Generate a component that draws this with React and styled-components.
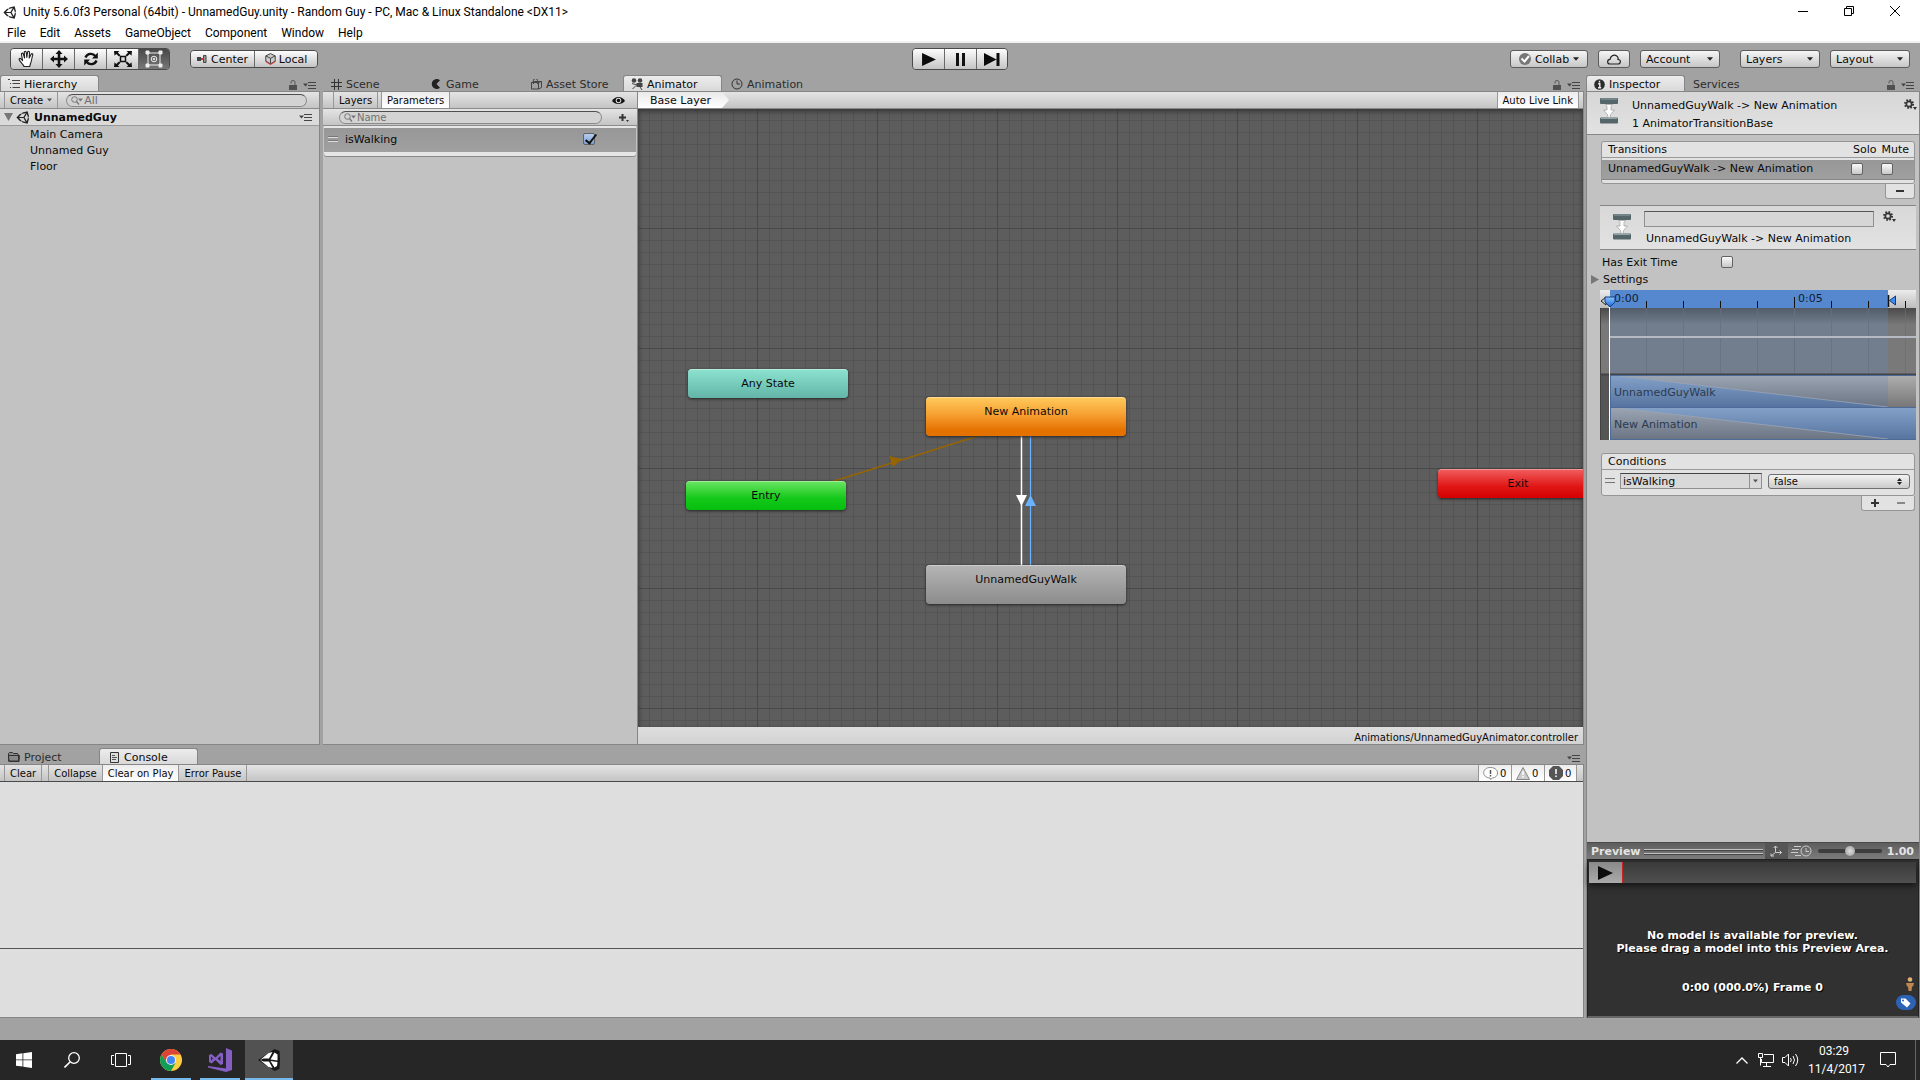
import React from 'react';
import styled, { createGlobalStyle } from 'styled-components';
import { FaUnity } from 'react-icons/fa';

const GlobalStyle = createGlobalStyle`
	* {
		box-sizing: border-box;
	}
	body {
		margin: 0;
		background: #a2a2a2;
		font-family: 'DejaVu Sans', Verdana, sans-serif;
		font-size: 11px;
		color: #0a0a0a;
	}
	button, input, select {
		font: inherit;
		color: inherit;
		margin: 0;
		border-radius: 0;
	}
	h1, h2, p, ul {
		margin: 0;
		padding: 0;
		font-size: inherit;
		font-weight: inherit;
		list-style: none;
	}
	svg {
		display: block;
		flex: none;
	}
`

const Screen = styled.div`
	display: flex;
	flex-direction: column;
	min-height: 100vh;
`

/* ---------- window chrome ---------- */

const TitleBar = styled.header`
	display: flex;
	align-items: center;
	height: 24px;
	padding: 0 2px 0 3px;
	background: #fff;
	font-family: Roboto, 'Noto Sans', sans-serif;
	font-size: 12px;
	color: #000;
	h1 {
		flex: 1;
		padding-left: 5px;
		white-space: nowrap;
	}
`

const WindowButton = styled.button`
	display: flex;
	justify-content: center;
	align-items: center;
	width: 46px;
	height: 24px;
	padding: 0 0 3px;
	border: 0;
	background: none;
`

const MenuBar = styled.nav`
	display: flex;
	gap: 14px;
	height: 19px;
	padding: 0 7px;
	border-bottom: 2px solid #f0f0f0;
	background: #fff;
	font-family: Roboto, 'Noto Sans', sans-serif;
	font-size: 12px;
	line-height: 18px;
	a {
		color: #000;
		text-decoration: none;
	}
`

const Toolbar = styled.div`
	display: grid;
	grid-template-columns: 1fr auto 1fr;
	align-items: center;
	height: 32px;
	padding: 0 10px;
`

const ToolbarSide = styled.div`
	display: flex;
	align-items: center;
	justify-content: ${(props) => (props.$end ? 'flex-end' : 'flex-start')};
	gap: ${(props) => (props.$end ? '10px' : '20px')};
`

const ButtonGroup = styled.div`
	display: flex;
	border: 1px solid #4a4a4a;
	border-radius: 4px;
	overflow: hidden;
`

const ToolButton = styled.button`
	display: flex;
	align-items: center;
	justify-content: center;
	gap: 3px;
	width: ${(props) => (props.$wide ? '64px' : '32px')};
	height: ${(props) => (props.$wide ? '16px' : '20px')};
	padding: 0;
	border: 0;
	background: ${(props) => (props.$on ? 'linear-gradient(#484848, #777)' : 'linear-gradient(#fdfdfd, #c4c4c4)')};
	& + & {
		border-left: 1px solid #6a6a6a;
	}
	&:first-child,
	&:last-child {
		width: ${(props) => (props.$wide ? '63px' : '31px')};
	}
`

const PillButton = styled.button`
	display: flex;
	align-items: center;
	justify-content: center;
	gap: 4px;
	width: ${(props) => (props.$small ? '32px' : '78px')};
	height: 18px;
	padding: 0;
	border: 1px solid #5c5c5c;
	border-radius: 3px;
	background: linear-gradient(#f6f6f6, #c6c6c6);
`

const MenuSelect = styled.span`
	position: relative;
	display: flex;
	margin-left: ${(props) => (props.$apart ? '10px' : '0')};
	select {
		appearance: none;
		width: 80px;
		height: 18px;
		padding: 0 5px;
		border: 1px solid #5c5c5c;
		border-radius: 3px;
		background: linear-gradient(#f6f6f6, #c6c6c6);
	}
	svg {
		position: absolute;
		right: 7px;
		top: 7px;
		pointer-events: none;
	}
`

/* ---------- docked panels ---------- */

const Workspace = styled.main`
	flex: 1;
	display: grid;
	grid-template-columns: minmax(0, 1fr) 334px;
	gap: 2px;
`

const MainColumn = styled.div`
	display: flex;
	flex-direction: column;
	gap: 3px;
	min-width: 0;
`

const TopRow = styled.div`
	flex: 1;
	display: grid;
	grid-template-columns: 320px minmax(0, 1fr);
	gap: 3px;
`

const Panel = styled.section`
	display: flex;
	flex-direction: column;
	min-width: 0;
	${(props) => props.$short && 'height: 270px;'}
`

const TabStrip = styled.div`
	display: flex;
	align-items: flex-end;
	height: 16px;
	padding-right: ${(props) => props.$inset || '4px'};
	gap: ${(props) => (props.$spaced ? '1px' : '0')};
`

const Tab = styled.button`
	display: flex;
	align-items: center;
	gap: 4px;
	width: 99px;
	height: 16px;
	padding: 1px 7px 0;
	border: 1px solid transparent;
	border-bottom: 0;
	background: none;
	color: #2c2c2c;
	white-space: nowrap;
	${(props) =>
		props.$active &&
		`
		border-color: #858585;
		border-radius: 3px 3px 0 0;
		background: linear-gradient(#ececec, #d9d9d9);
		color: #0a0a0a;
	`}
`

const TabTools = styled.div`
	display: flex;
	align-items: center;
	gap: 6px;
	height: 11px;
	margin-left: auto;
	button {
		padding: 0;
		border: 0;
		background: none;
	}
`

const PanelBody = styled.div`
	flex: 1;
	display: flex;
	flex-direction: column;
	min-width: 0;
	border: 1px solid #868686;
	border-left: 0;
	background: #c2c2c2;
`

const MiniBar = styled.div`
	display: flex;
	align-items: center;
	height: 17px;
	padding: 0 4px;
	border-bottom: 1px solid #8b8b8b;
	background: linear-gradient(#e4e4e4, #c4c4c4);
`

const MiniButton = styled.button`
	display: flex;
	align-items: center;
	gap: 4px;
	height: 16px;
	padding: 0 5px;
	border: 0;
	border-left: 1px solid #979797;
	border-right: ${(props) => (props.$last ? '1px solid #979797' : '0')};
	margin-right: ${(props) => props.$gap || '0'};
	background: ${(props) => (props.$on ? 'linear-gradient(#ededed, #fff)' : 'none')};
	font-size: 10px;
	white-space: nowrap;
`

const SearchBox = styled.label`
	flex: 1;
	display: flex;
	align-items: center;
	gap: 1px;
	height: 13px;
	margin: 0 8px;
	padding: 0 4px;
	border: 1px solid #8a8a8a;
	border-top-color: #4f4f4f;
	border-radius: 7px;
	background: #d3d3d3;
	input {
		flex: 1;
		min-width: 0;
		height: 11px;
		padding: 0;
		border: 0;
		outline: 0;
		background: none;
		font-size: ${(props) => props.$size || '11px'};
		line-height: 11px;
		&::placeholder {
			color: #707070;
			opacity: 1;
		}
	}
`

const SceneRow = styled.div`
	display: flex;
	align-items: center;
	gap: 3px;
	height: 17px;
	padding: 0 7px 0 4px;
	border-bottom: 1px solid #999;
	background: #dadada;
	font-weight: bold;
	button {
		margin-left: auto;
		padding: 0;
		border: 0;
		background: none;
	}
`

const ObjectList = styled.ul`
	li {
		height: 16px;
		padding-left: 30px;
		line-height: 17px;
	}
`

/* ---------- animator ---------- */

const AnimatorBody = styled.div`
	flex: 1;
	display: grid;
	grid-template-columns: 315px minmax(0, 1fr);
	border-bottom: 1px solid #868686;
`

const Side = styled.div`
	display: flex;
	flex-direction: column;
	border-top: 1px solid #868686;
	border-right: 1px solid #868686;
	background: #c2c2c2;
`

const ParamBar = styled(MiniBar)`
	padding-left: 10px;
	padding-right: 12px;
`

const FilterBar = styled(MiniBar)`
	padding: 0 6px 0 8px;
`

const IconButton = styled.button`
	display: flex;
	padding: 0;
	border: 0;
	margin-left: auto;
	background: none;
`

const ParamRow = styled.div`
	display: flex;
	align-items: center;
	gap: 7px;
	height: 30px;
	margin: 0 1px;
	padding: 0 41px 2px 4px;
	border: solid #e6e6e6;
	border-width: 2px 0 4px;
	border-radius: 0 0 3px 3px;
	box-shadow: 0 1px 0 #8a8a8a;
	background: linear-gradient(#979797, #a0a0a0);
	label {
		flex: 1;
	}
`

const Check = styled.input`
	appearance: none;
	display: flex;
	flex: none;
	width: 12px;
	height: 12px;
	border: 1px solid #636363;
	border-radius: 2px;
	background: linear-gradient(#fafafa, #c8c8c8);
	&:checked {
		background: linear-gradient(#b5cdf0, #7d9fd2);
	}
	&:checked::after {
		content: '';
		width: 5px;
		height: 10px;
		margin: -2px 0 0 4px;
		border: solid #111;
		border-width: 0 2px 2px 0;
		transform: rotate(38deg);
	}
`

const GraphColumn = styled.div`
	display: flex;
	flex-direction: column;
	min-width: 0;
	border-top: 1px solid #868686;
	border-right: 1px solid #868686;
`

const Crumb = styled.div`
	display: flex;
	align-items: center;
	width: 91px;
	height: 16px;
	padding-left: 12px;
	background: linear-gradient(#e9e9e9, #fff);
	clip-path: polygon(0 0, 84px 0, 100% 50%, 84px 100%, 0 100%);
`

const GraphBar = styled(MiniBar)`
	justify-content: space-between;
	padding: 0 4px 0 0;
`

const Graph = styled.div`
	flex: 1;
	position: relative;
	overflow: hidden;
	background-color: #5d5d5d;
	background-image: linear-gradient(90deg, #484848 1px, transparent 1px), linear-gradient(#484848 1px, transparent 1px),
		linear-gradient(90deg, #545454 1px, transparent 1px), linear-gradient(#545454 1px, transparent 1px);
	background-size: 120px 120px, 120px 120px, 12px 12px, 12px 12px;
	background-position: -1px -1px;
	box-shadow: inset 0 5px 6px -3px #333, inset 3px 0 4px -2px #444, inset -3px 0 4px -2px #444;
	svg {
		position: absolute;
		left: 0;
		top: 0;
	}
`

const nodeColors = {
	teal: '#8ce3cf, #62b5a8',
	orange: '#ffcb5c, #f7a032 45%, #e57200 85%',
	green: '#6be563, #14c81a 60%, #05bf0d',
	grey: '#b5b5b5, #8c8c8c',
	red: '#f15f5f, #e01616 60%, #d40000',
};

const Node = styled.div`
	position: absolute;
	left: ${(props) => props.$x}px;
	top: ${(props) => props.$y}px;
	width: ${(props) => (props.$state ? 200 : 160)}px;
	height: ${(props) => (props.$state ? 39 : 29)}px;
	border-radius: 4px;
	background: linear-gradient(${(props) => nodeColors[props.$color]});
	box-shadow: 0 1px 3px #222, inset 0 1px 0 rgba(255, 255, 255, 0.35);
	line-height: 29px;
	text-align: center;
`

const GraphStatus = styled.footer`
	height: 17px;
	padding-right: 5px;
	background: linear-gradient(#dedede, #d2d2d2);
	font-size: 10px;
	line-height: 22px;
	text-align: right;
`

/* ---------- console ---------- */

const ConsoleBody = styled(PanelBody)`
	background: #dedede;
`

const ConsoleBar = styled(MiniBar)`
	padding-right: 6px;
	border-bottom-color: #4a4a4a;
`

const Counters = styled.div`
	display: flex;
	margin-left: auto;
	button {
		width: 33px;
		padding: 0 4px;
		gap: 2px;
	}
`

const LogList = styled.div`
	flex: 1;
	border-bottom: 1px solid #555;
`

const LogDetail = styled.div`
	height: 68px;
`

/* ---------- inspector ---------- */

const InspectorBody = styled(PanelBody)`
	border-left: 1px solid #868686;
	border-bottom: 0;
`

const InspectorHead = styled.div`
	display: flex;
	gap: 14px;
	height: 43px;
	padding: 5px 2px 0 13px;
	border-bottom: 1px solid #868686;
	background: linear-gradient(#d6d6d6, #e2e2e2);
	line-height: 18px;
	div {
		flex: 1;
	}
	button {
		align-items: flex-start;
		height: 14px;
		margin-top: 2px;
	}
`

const ListBox = styled.div`
	margin: ${(props) => props.$top} 4px 0 14px;
	border: 1px solid #959595;
	border-radius: 3px;
	background: #e2e2e2;
`

const ListHead = styled.div`
	display: flex;
	gap: 5px;
	height: 16px;
	padding: 0 5px 0 6px;
	border-bottom: 1px solid #999;
	line-height: 15px;
	span:first-child {
		flex: 1;
	}
`

const TransitionRow = styled.div`
	display: flex;
	align-items: center;
	height: 20px;
	margin: 2px 0 3px;
	padding: 0 21px 2px 6px;
	gap: 18px;
	border-bottom: 1px solid #888;
	background: linear-gradient(#979797, #a0a0a0);
	span {
		flex: 1;
	}
`

const ListFooter = styled.div`
	display: flex;
	align-self: flex-end;
	align-items: center;
	height: 15px;
	margin-right: 4px;
	border: 1px solid #959595;
	border-top: 0;
	border-radius: 0 0 3px 3px;
	background: #e2e2e2;
	button {
		display: flex;
		justify-content: center;
		align-items: center;
		width: ${(props) => (props.$pair ? '26px' : '28px')};
		padding: 0;
		border: 0;
		background: none;
	}
`

const TransitionHead = styled.div`
	display: grid;
	grid-template-columns: 31px 239px auto;
	height: 45px;
	margin: 6px 3px 5px 13px;
	padding: 5px 0 0 13px;
	border: solid #868686;
	border-width: 1px 0;
	background: linear-gradient(#d8d8d8, #e2e2e2);
	> svg {
		grid-row: 1 / 3;
		margin-top: 2px;
	}
	input {
		width: 230px;
		height: 16px;
		border: 1px solid #909090;
		border-top-color: #555;
		background: #d6d6d6;
	}
	p {
		grid-column: 2;
		padding-left: 2px;
		line-height: 24px;
		white-space: nowrap;
	}
	button {
		margin: 0;
	}
`

const Field = styled.div`
	display: flex;
	align-items: center;
	height: 14px;
	padding-left: 15px;
	label {
		width: 119px;
	}
`

const Foldout = styled.button`
	display: flex;
	align-items: center;
	gap: 4px;
	height: 21px;
	padding: 0 4px;
	border: 0;
	background: none;
`

const Timeline = styled.div`
	height: 150px;
	margin: 0 3px 0 13px;
	overflow: hidden;
	background: #555;
	font-size: 11px;
`

const ConditionRow = styled.div`
	display: flex;
	align-items: center;
	gap: 5px;
	height: 25px;
	padding: 0 4px 3px 3px;
	> select {
		appearance: none;
		width: 142px;
		height: 15px;
		margin-left: 1px;
		padding: 0 5px;
		border: 1px solid #6f6f6f;
		border-radius: 3px;
		background: linear-gradient(#f3f3f3, #cbcbcb);
		font-size: 10px;
	}
	> svg:last-child {
		margin-left: -18px;
		margin-right: 5px;
		pointer-events: none;
	}
`

const ComboBox = styled.div`
	display: flex;
	width: 142px;
	height: 16px;
	border: 1px solid #909090;
	border-top-color: #444;
	background: #d9d9d9;
	input {
		flex: 1;
		min-width: 0;
		padding: 0 2px;
		border: 0;
		background: none;
	}
	button {
		display: flex;
		justify-content: center;
		width: 12px;
		padding: 5px 0 0;
		border: 0;
		border-left: 1px solid #909090;
		background: none;
	}
`

const PreviewBar = styled.div`
	display: flex;
	align-items: center;
	height: 17px;
	margin-top: auto;
	padding: 0 5px 0 4px;
	border-top: 1px solid #4a4a4a;
	background: linear-gradient(#5d5d5d, #7c7c7c);
	color: #e4e4e4;
	font-weight: bold;
`

const Grip = styled.div`
	flex: 1;
	height: 5px;
	margin: 0 2px 0 3px;
	border: solid #c0c0c0;
	border-width: 1px 0;
	box-shadow: 0 1px 0 #444, inset 0 1px 0 #444;
`

const PivotButton = styled.button`
	display: flex;
	justify-content: center;
	align-items: center;
	width: 23px;
	height: 16px;
	padding: 0;
	border: 0;
	margin-right: 3px;
	background: #555;
`

const Speed = styled.input`
	appearance: none;
	width: 64px;
	height: 12px;
	margin: 0 5px 0 6px !important;
	background: none;
	&::-webkit-slider-runnable-track {
		height: 4px;
		border-radius: 2px;
		background: #3d3d3d;
	}
	&::-webkit-slider-thumb {
		appearance: none;
		width: 10px;
		height: 10px;
		margin-top: -3px;
		border-radius: 50%;
		background: radial-gradient(#ddd, #999);
	}
`

const Preview = styled.div`
	display: flex;
	flex-direction: column;
	height: 159px;
	padding: 2px 2px 2px 1px;
	border: 1px solid #222;
	border-bottom: 2px solid #666;
	background: #313131;
	color: #fff;
	font-weight: bold;
	text-align: center;
	text-shadow: 1px 1px 1px #000;
	line-height: 13px;
`

const PlayStrip = styled.div`
	height: 21px;
	margin-bottom: 46px;
	background: linear-gradient(#3a3a3a, #505050);
	box-shadow: 0 3px 6px #161616;
	button {
		display: flex;
		align-items: center;
		width: 34px;
		height: 21px;
		padding: 0 9px;
		border: 0;
		border-right: 1px solid #c22;
		background: linear-gradient(#8a8a8a, #aaa);
	}
`

const PreviewFooter = styled.div`
	display: grid;
	grid-template-columns: 20px 1fr 20px;
	margin-top: 22px;
	align-items: start;
	p {
		grid-column: 2;
		padding-top: 4px;
	}
	div {
		display: flex;
		flex-direction: column;
		align-items: flex-end;
		gap: 4px;
		svg:first-child {
			margin-right: 2px;
		}
	}
`

const StatusStrip = styled.div`
	height: 22px;
`

/* ---------- taskbar ---------- */

const Taskbar = styled.footer`
	display: flex;
	height: 40px;
	background: #262626;
	color: #fff;
	font-family: Roboto, 'Noto Sans', sans-serif;
	font-size: 12px;
`

const TaskButton = styled.button`
	display: flex;
	flex-direction: column;
	align-items: center;
	justify-content: center;
	position: relative;
	width: ${(props) => props.$width || '48px'};
	height: 40px;
	padding: 0;
	border: 0;
	margin-right: 1px;
	background: ${(props) => (props.$active ? '#525252' : 'none')};
	&::after {
		content: '';
		display: ${(props) => (props.$running ? 'block' : 'none')};
		position: absolute;
		bottom: 0;
		left: ${(props) => (props.$active ? '0' : '4px')};
		right: ${(props) => (props.$active ? '0' : '4px')};
		height: 2px;
		background: #76b9ed;
	}
`

const Tray = styled.div`
	display: flex;
	align-items: center;
	margin-left: auto;
	padding-right: 4px;
	button {
		display: flex;
		align-items: center;
		justify-content: center;
		width: 24px;
		height: 40px;
		padding: 0;
		border: 0;
		background: none;
	}
	time {
		width: 52px;
		margin-left: 6px;
		line-height: 18px;
		text-align: center;
		white-space: nowrap;
	}
`

const NoticeButton = styled.span`
	display: flex;
	justify-content: center;
	width: 56px;
	height: 40px;
	border-right: 1px solid #666;
`

/* ---------- icons ---------- */

const Caret = ({ size = 7, color = '#222' }) => (
	<svg width={size} height='4' viewBox='0 0 7 4'>
		<path d='M0 0h7L3.5 4z' fill={color} />
	</svg>
);

const Lock = () => (
	<svg width='8' height='11' viewBox='0 0 8 11'>
		<path d='M2 3.500V2.500a2 2 0 0 1 4 0V5' fill='none' stroke='#666' strokeWidth='1.200' />
		<path d='M0 5h8v5H0z' fill='#505050' />
	</svg>
);

const PaneMenu = () => (
	<svg width='13' height='7' viewBox='0 0 13 7'>
		<path d='M0 1.500h5L2.500 4.500z' fill='#444' />
		<path d='M5 .5h8M5 3.500h8M5 6.500h8' stroke='#444' />
	</svg>
);

const Tools = ({ lock = true }) => (
	<TabTools>
		{lock && (
			<button aria-label='Lock'>
				<Lock />
			</button>
		)}
		<button aria-label='Panel menu'>
			<PaneMenu />
		</button>
	</TabTools>
);

const Hand = () => (
	<svg width='18' height='18' viewBox='0 0 18 18' fill='#fff' stroke='#222' strokeWidth='1.1' strokeLinejoin='round'>
		<path d='M6 16.500c-.5-2-4-4.500-4.800-6.700-.5-1.500 1-2 2-.7l1.400 1.500L3.500 4.500c-.4-1.500 1.400-1.900 1.800-.5L6.600 8 6.300 2.500c0-1.500 1.800-1.500 2 0L8.800 7.500 9.600 2.200c.3-1.400 2-1.100 1.900.3L11.200 8l1.900-3.700c.7-1.200 2.100-.4 1.600.9-1 2.800-1 6-2.200 8.300l-.8 3z' />
	</svg>
);

const Move = () => (
	<svg width='18' height='18' viewBox='0 0 18 18' fill='#111'>
		<path d='M9 0l3.500 4H10.300v3.700H14V5.500L18 9l-4 3.500v-2.200h-3.700V14h2.200L9 18l-3.500-4h2.200v-3.700H4v2.200L0 9l4-3.500v2.200h3.700V4H5.500z' />
	</svg>
);

const Rotate = () => (
	<svg width='16' height='16' viewBox='0 0 16 16' fill='none' stroke='#111' strokeWidth='2.400'>
		<path d='M2.500 6.500C4 2.500 9.500 1.500 12.300 5M13.500 9.500C12 13.500 6.500 14.500 3.700 11' />
		<path d='M14.800 1.500v6H9zM1.200 14.500v-6H7z' fill='#111' stroke='none' />
	</svg>
);

const Scale = () => (
	<svg width='18' height='16' viewBox='0 0 18 16' fill='#111'>
		<path d='M0 0h5.500L3.800 1.500 6.500 4.200 5 5.500 2.200 3 .5 4.800zM18 0h-5.500l1.700 1.500-2.700 2.700L13 5.500 15.800 3l1.700 1.800zM0 16h5.500l-1.700-1.500 2.700-2.700L5 10.500 2.200 13 .5 11.200zM18 16h-5.500l1.700-1.500-2.700-2.700 1.500-1.300 2.800 2.500 1.700-1.800z' />
		<path d='M6.500 5.500h5v5h-5z' fill='#ddd' stroke='#111' strokeWidth='1.500' />
	</svg>
);

const RectTool = () => (
	<svg width='18' height='18' viewBox='0 0 18 18' fill='none' stroke='#eee'>
		<path d='M3 3h12v12H3z' />
		<path d='M1 1h3v3H1zM14 1h3v3h-3zM1 14h3v3H1zM14 14h3v3h-3z' fill='#eee' />
		<circle cx='9' cy='9' r='2.800' />
		<circle cx='9' cy='9' r='.8' fill='#eee' />
	</svg>
);

const PivotIcon = () => (
	<svg width='11' height='8' viewBox='0 0 11 8'>
		<path d='M0 2h4v4H0z' fill='#444' />
		<path d='M6.500.5h2.500v7H6.500z' fill='#999' stroke='#444' />
		<path d='M4 4h2.500' stroke='#c33' strokeWidth='2' />
	</svg>
);

const LocalIcon = () => (
	<svg width='11' height='12' viewBox='0 0 11 12' stroke='#444' fill='#ccc'>
		<path d='M5.500.6l4.700 2.300v5.200L5.500 10.900.8 8.100V2.900z' />
		<path d='M.8 2.900l4.700 2.400 4.700-2.400M5.500 5.300v5.400' fill='none' />
		<path d='M.5 8.500l5 3 5-3' fill='none' stroke='#d33' />
	</svg>
);

const Play = ({ size = 15 }) => (
	<svg width={size} height={size - 1} viewBox='0 0 15 14'>
		<path d='M0 0l15 7-15 7z' fill='#0c0c0c' />
	</svg>
);

const Pause = () => (
	<svg width='9' height='13' viewBox='0 0 9 13'>
		<path d='M0 0h3v13H0zM6 0h3v13H6z' fill='#111' />
	</svg>
);

const Step = () => (
	<svg width='16' height='13' viewBox='0 0 16 13'>
		<path d='M0 0l12.500 6.500L0 13zM12.500 0H15.500v13h-3z' fill='#0c0c0c' />
	</svg>
);

const Magnifier = () => (
	<svg width='12' height='9' viewBox='0 0 12 9' fill='none' stroke='#777'>
		<circle cx='3.500' cy='3.500' r='2.800' />
		<path d='M5.500 5.500L8 8.500' strokeWidth='1.300' />
		<path d='M7 2.500h5L9.500 5.500z' fill='#777' stroke='none' />
	</svg>
);

const Handle = () => (
	<svg width='10' height='6' viewBox='0 0 10 6'>
		<path d='M0 1.500h10M0 5.500h10' stroke='#ddd' />
		<path d='M0 .5h10M0 4.500h10' stroke='#777' />
	</svg>
);

const Gear = () => (
	<svg width='13' height='12' viewBox='0 0 13 12'>
		<circle cx='5' cy='5' r='4' fill='none' stroke='#333' strokeWidth='2' strokeDasharray='1.600 1.542' />
		<circle cx='5' cy='5' r='2.700' fill='none' stroke='#333' strokeWidth='1.700' />
		<path d='M9 8h4l-2 3z' fill='#333' />
	</svg>
);

const TransitionIcon = () => (
	<svg width='18' height='27' viewBox='0 0 18 27'>
		<rect x='0' y='1' width='18' height='6' rx='1' fill='#55666b' />
		<rect x='0' y='20.500' width='18' height='6' rx='1' fill='#55666b' />
		<path d='M1 2h16M1 21.500h16' stroke='#93a3a8' />
		<path d='M5.500 7.500h7l-1.500 2v3.500h3.500l-4 4.500-.5 3H8l-.5-3L3.500 13H7V9.500z' fill='#fff' stroke='#a5a5a5' strokeWidth='.8' />
	</svg>
);

const tabIcons = {
	Hierarchy: (
		<svg width='12' height='10' viewBox='0 0 12 10' stroke='#444'>
			<path d='M0 .5h2M4 1.500h8M2 4.500h1M4.500 4.500H12M2 8.500h1M4.500 8.500H12' />
		</svg>
	),
	Scene: (
		<svg width='11' height='11' viewBox='0 0 11 11' stroke='#333'>
			<path d='M3.500 0v11M7.500 0v11M0 3.500h11M0 7.500h11' />
		</svg>
	),
	Game: (
		<svg width='11' height='10' viewBox='-1 0 11 10'>
			<path d='M8 1.200A5 5 0 1 0 8 8.800L4.500 5z' fill='#222' />
		</svg>
	),
	'Asset Store': (
		<svg width='11' height='11' viewBox='0 0 11 11' fill='none' stroke='#444'>
			<path d='M.5 3.500h7v6.500h-7zM7.500 3.500l3-1v6l-3 1.500M.5 3.500l3-1h7M2.500 5V1.500a1.500 1.500 0 0 1 4 0V5' />
		</svg>
	),
	Animator: (
		<svg width='12' height='12' viewBox='0 0 12 12' fill='#444'>
			<circle cx='3' cy='2.500' r='2.300' />
			<circle cx='9' cy='2.500' r='2.300' />
			<path d='M5.500 5h6v4h-6z' />
			<path d='M1 5.500l5 1.500M5 7.500L1.500 11M9 9l2 3' stroke='#444' />
		</svg>
	),
	Animation: (
		<svg width='12' height='12' viewBox='0 0 12 12' fill='none' stroke='#333'>
			<circle cx='6' cy='6' r='5' />
			<path d='M6 2.500V6h3' />
		</svg>
	),
	Inspector: (
		<svg width='11' height='11' viewBox='0 0 11 11'>
			<circle cx='5.500' cy='5.500' r='5.300' fill='#2a2a2a' />
			<path d='M5.500 1.800v1.700M4.200 4.800h1.600v3.700M4 8.700h3.200' stroke='#eee' strokeWidth='1.400' fill='none' />
		</svg>
	),
	Project: (
		<svg width='12' height='10' viewBox='0 0 12 10'>
			<path d='M.5 9V1.500l1-1h3l1 1h4l1 1.500V9zM.5 3.500h11L11 9.500H1z' fill='#888' stroke='#333' />
		</svg>
	),
	Console: (
		<svg width='13' height='11' viewBox='-3 0 13 11'>
			<path d='M.5.500h8v10h-8z' fill='#ddd' stroke='#333' />
			<path d='M2 3.500h3M2 5.500h5M2 7.500h4' stroke='#555' />
		</svg>
	),
};

const tools = [
	['Hand', Hand],
	['Move', Move],
	['Rotate', Rotate],
	['Scale', Scale],
	['Rect', RectTool],
];

const menus = ['File', 'Edit', 'Assets', 'GameObject', 'Component', 'Window', 'Help'];

const Tabs = ({ names, active }) =>
	names.map((name) => (
		<Tab key={name} $active={name === active}>
			{tabIcons[name]}
			{name}
		</Tab>
	));

const Dropdown = ({ name, apart }) => (
	<MenuSelect $apart={apart}>
		<select aria-label={name}>
			<option>{name}</option>
		</select>
		<Caret size={6} />
	</MenuSelect>
);

const MainToolbar = () => (
	<Toolbar>
		<ToolbarSide>
			<ButtonGroup>
				{tools.map(([name, Icon]) => (
					<ToolButton key={name} aria-label={name} $on={name === 'Rect'}>
						<Icon />
					</ToolButton>
				))}
			</ButtonGroup>
			<ButtonGroup>
				<ToolButton $wide>
					<PivotIcon />
					Center
				</ToolButton>
				<ToolButton $wide>
					<LocalIcon />
					Local
				</ToolButton>
			</ButtonGroup>
		</ToolbarSide>
		<ButtonGroup>
			<ToolButton aria-label='Play'>
				<Play size={14} />
			</ToolButton>
			<ToolButton aria-label='Pause'>
				<Pause />
			</ToolButton>
			<ToolButton aria-label='Step'>
				<Step />
			</ToolButton>
		</ButtonGroup>
		<ToolbarSide $end>
			<PillButton>
				<svg width='12' height='12' viewBox='0 0 12 12'>
					<circle cx='6' cy='6' r='6' fill='#777' />
					<path d='M2.500 5.500L5.500 8.500 10 3' fill='none' stroke='#fff' strokeWidth='2' />
				</svg>
				Collab
				<Caret size={6} />
			</PillButton>
			<PillButton $small aria-label='Cloud'>
				<svg width='14' height='11' viewBox='0 0 14 11'>
					<path d='M3 10A2.300 2.300 0 0 1 3 5.300C3.500 2.500 6 .7 8.500 1.300 10.500 1.800 11.500 4 11 5.500 14.300 5.500 14 10 11 10z' fill='none' stroke='#222' strokeWidth='1.200' />
				</svg>
			</PillButton>
			<Dropdown name='Account' />
			<Dropdown name='Layers' apart />
			<Dropdown name='Layout' />
		</ToolbarSide>
	</Toolbar>
);

const Hierarchy = () => (
	<Panel>
		<TabStrip>
			<Tabs names={['Hierarchy']} active='Hierarchy' />
			<Tools />
		</TabStrip>
		<PanelBody>
			<MiniBar>
				<MiniButton $last>
					Create
					<Caret size={5} color='#555' />
				</MiniButton>
				<SearchBox>
					<Magnifier />
					<input type='text' placeholder='All' aria-label='Search hierarchy' />
				</SearchBox>
			</MiniBar>
			<SceneRow>
				<svg width='9' height='8' viewBox='0 0 9 8'>
					<path d='M0 0h9L4.500 8z' fill='#777' />
				</svg>
				<FaUnity size={15} color='#222' />
				UnnamedGuy
				<button aria-label='Scene menu'>
					<PaneMenu />
				</button>
			</SceneRow>
			<ObjectList>
				<li>Main Camera</li>
				<li>Unnamed Guy</li>
				<li>Floor</li>
			</ObjectList>
		</PanelBody>
	</Panel>
);

const Animator = () => (
	<Panel>
		<TabStrip $spaced>
			<Tabs names={['Scene', 'Game', 'Asset Store', 'Animator', 'Animation']} active='Animator' />
			<Tools />
		</TabStrip>
		<AnimatorBody>
			<Side>
				<ParamBar>
					<MiniButton $last $gap='3px'>Layers</MiniButton>
					<MiniButton $last $on>Parameters</MiniButton>
					<IconButton aria-label='Toggle side panel'>
						<svg width='13' height='9' viewBox='0 0 13 9'>
							<path d='M0 5C3-.5 10-.5 13 5 10 9 3 9 0 5z' fill='#111' />
							<circle cx='6.500' cy='4.500' r='2.800' fill='#ddd' />
							<circle cx='6.500' cy='4.500' r='1.800' fill='#111' />
						</svg>
					</IconButton>
				</ParamBar>
				<FilterBar>
					<SearchBox $size='10px'>
						<Magnifier />
						<input type='text' placeholder='Name' aria-label='Search parameters' />
					</SearchBox>
					<IconButton aria-label='Add parameter'>
						<svg width='21' height='9' viewBox='1 0 21 9'>
							<path d='M13.500 1v7M10 4.500h7' stroke='#333' strokeWidth='2' />
							<path d='M17 7h3l-1.500 2z' fill='#333' />
						</svg>
					</IconButton>
				</FilterBar>
				<ParamRow>
					<Handle />
					<label htmlFor='param'>isWalking</label>
					<Check id='param' type='checkbox' defaultChecked />
				</ParamRow>
			</Side>
			<GraphColumn>
				<GraphBar>
					<Crumb>Base Layer</Crumb>
					<MiniButton $last $on>Auto Live Link</MiniButton>
				</GraphBar>
				<Graph>
					<svg width='945' height='617' fill='none'>
						<path d='M190 374L340 327' stroke='#966400' strokeWidth='1.500' />
						<path d='M251 347l13 3-9 8z' fill='#966400' />
						<path d='M383.500 327V458' stroke='#fff' strokeWidth='1.500' />
						<path d='M378 386h11l-5.500 11z' fill='#fff' />
						<path d='M392.500 327V458' stroke='#6ab1ff' strokeWidth='1.200' />
						<path d='M387 397h11l-5.500-11z' fill='#6ab1ff' />
					</svg>
					<Node $x={50} $y={260} $color='teal'>Any State</Node>
					<Node $x={288} $y={288} $color='orange' $state>New Animation</Node>
					<Node $x={48} $y={372} $color='green'>Entry</Node>
					<Node $x={288} $y={456} $color='grey' $state>UnnamedGuyWalk</Node>
					<Node $x={800} $y={360} $color='red'>Exit</Node>
				</Graph>
				<GraphStatus>Animations/UnnamedGuyAnimator.controller</GraphStatus>
			</GraphColumn>
		</AnimatorBody>
	</Panel>
);

const Console = () => (
	<Panel $short>
		<TabStrip>
			<Tabs names={['Project', 'Console']} active='Console' />
			<Tools lock={false} />
		</TabStrip>
		<ConsoleBody>
			<ConsoleBar>
				<MiniButton $last $gap='6px'>Clear</MiniButton>
				<MiniButton>Collapse</MiniButton>
				<MiniButton $on>Clear on Play</MiniButton>
				<MiniButton $last>Error Pause</MiniButton>
				<Counters>
					<MiniButton $on aria-label='Messages'>
						<svg width='15' height='13' viewBox='0 0 15 13'>
							<path d='M7.500.5c9 0 9 10 2 10.500l-2 1.500-.5-1.500C-1.500 10.500-1.500.5 7.500.5z' fill='#fff' stroke='#888' />
							<path d='M7.500 3v4M7.500 8v1.500' stroke='#555' strokeWidth='1.500' />
						</svg>
						0
					</MiniButton>
					<MiniButton $on aria-label='Warnings'>
						<svg width='14' height='13' viewBox='0 0 14 13'>
							<path d='M7 .5l6.500 12H.5z' fill='#ccc' stroke='#888' />
							<path d='M7 4v4M7 9v1.500' stroke='#fff' strokeWidth='1.500' />
						</svg>
						0
					</MiniButton>
					<MiniButton $last $on aria-label='Errors'>
						<svg width='14' height='14' viewBox='0 0 14 14'>
							<path d='M4 0h6l4 4v6l-4 4H4l-4-4V4z' fill='#555' />
							<path d='M7 3v5M7 9.500V11' stroke='#fff' strokeWidth='1.500' />
						</svg>
						0
					</MiniButton>
				</Counters>
			</ConsoleBar>
			<LogList />
			<LogDetail />
		</ConsoleBody>
	</Panel>
);

const ticks = [46.5, 83.5, 120.5, 157.5, 231.5, 268.5, 305.5];

const TransitionTimeline = () => (
	<Timeline>
		<svg width='316' height='150' fill='#0f1d30'>
			<defs>
				<linearGradient id='ruler' x2='0' y2='1'>
					<stop stopColor='#ececec' />
					<stop offset='1' stopColor='#bcbcbc' />
				</linearGradient>
				<linearGradient id='curve' x2='0' y2='1'>
					<stop stopColor='#4a4a4a' />
					<stop offset='.25' stopColor='#787878' />
					<stop offset='1' stopColor='#7a7a7a' />
				</linearGradient>
				<linearGradient id='curveOn' x2='0' y2='1'>
					<stop stopColor='#525c69' />
					<stop offset='.25' stopColor='#727d8d' />
					<stop offset='1' stopColor='#737d8d' />
				</linearGradient>
				<linearGradient id='blue' x2='0' y2='1'>
					<stop stopColor='#83a0c8' />
					<stop offset='1' stopColor='#56749f' />
				</linearGradient>
				<linearGradient id='greyBlue' x2='0' y2='1'>
					<stop stopColor='#9aa4b3' />
					<stop offset='1' stopColor='#6c7583' />
				</linearGradient>
				<linearGradient id='grey' x2='0' y2='1'>
					<stop stopColor='#adadad' />
					<stop offset='1' stopColor='#777' />
				</linearGradient>
				<linearGradient id='marker' x2='0' y2='1'>
					<stop stopColor='#8fc4ff' />
					<stop offset='1' stopColor='#1668d8' />
				</linearGradient>
			</defs>
			<rect width='316' height='18' fill='url(#ruler)' />
			<rect x='10' width='278' height='18' fill='#5588cf' />
			<rect y='18' width='316' height='66' fill='url(#curve)' />
			<rect x='10' y='18' width='278' height='66' fill='url(#curveOn)' />
			<path d='M194.500 7v11' stroke='#111' />
			<path d='M194.500 18v66' stroke='#667080' />
			{ticks.map((x) => (
				<g key={x}>
					<path d={`M${x} 11v7`} stroke='#111' />
					<path d={`M${x} 18v66`} stroke='#667080' opacity='.7' />
				</g>
			))}
			<path d='M10 47h306' stroke='#b5bac2' strokeWidth='2' />
			<path d='M0 84.500h316' stroke='#444' strokeWidth='2' />
			<rect x='11' y='86' width='278' height='31' fill='url(#greyBlue)' />
			<rect x='288' y='86' width='28' height='31' fill='url(#grey)' />
			<path d='M11 86h8L288 117H11z' fill='url(#blue)' />
			<rect x='11' y='118' width='305' height='32' fill='url(#blue)' />
			<path d='M11 118h8L288 149H11z' fill='url(#greyBlue)' />
			<path d='M19 86L288 117M19 118L288 149' stroke='#9aa6b6' strokeWidth='.8' />
			<path d='M10.500 150V86M10 85.500h306M10 117.500h306M10 149.500h306' stroke='#4e6a98' fill='none' />
			<path d='M.5 18v132' stroke='#444' />
			<path d='M9.500 17v133' stroke='#fff' />
			<text x='14' y='12'>0:00</text>
			<text x='198' y='12'>0:05</text>
			<text x='14' y='106' fill='#2b3a50'>UnnamedGuyWalk</text>
			<text x='14' y='138' fill='#2b3a50'>New Animation</text>
			<path d='M1 11l5-4v8z' fill='#ccc' stroke='#222' />
			<path d='M5 7h10v5l-5 5-5-5z' fill='url(#marker)' stroke='#123c80' />
			<path d='M288.500 5v12' stroke='#111' strokeWidth='1.500' />
			<path d='M295.500 6v9l-6-4.500z' fill='#3d8cf0' stroke='#123c80' />
		</svg>
	</Timeline>
);

const Inspector = () => (
	<Panel>
		<TabStrip $inset='6px'>
			<Tabs names={['Inspector', 'Services']} active='Inspector' />
			<Tools />
		</TabStrip>
		<InspectorBody>
			<InspectorHead>
				<TransitionIcon />
				<div>
					<p>UnnamedGuyWalk -&gt; New Animation</p>
					<p>1 AnimatorTransitionBase</p>
				</div>
				<IconButton aria-label='Options'>
					<Gear />
				</IconButton>
			</InspectorHead>
			<ListBox $top='6px'>
				<ListHead>
					<span>Transitions</span>
					<span>Solo</span>
					<span>Mute</span>
				</ListHead>
				<TransitionRow>
					<span>UnnamedGuyWalk -&gt; New Animation</span>
					<Check type='checkbox' aria-label='Solo' />
					<Check type='checkbox' aria-label='Mute' />
				</TransitionRow>
			</ListBox>
			<ListFooter>
				<button aria-label='Remove transition'>
					<svg width='8' height='2'>
						<path d='M0 1h8' stroke='#333' strokeWidth='2' />
					</svg>
				</button>
			</ListFooter>
			<TransitionHead>
				<TransitionIcon />
				<input type='text' aria-label='Transition name' />
				<IconButton aria-label='Transition options'>
					<Gear />
				</IconButton>
				<p>UnnamedGuyWalk -&gt; New Animation</p>
			</TransitionHead>
			<Field>
				<label htmlFor='exit'>Has Exit Time</label>
				<Check id='exit' type='checkbox' />
			</Field>
			<Foldout>
				<svg width='8' height='9' viewBox='0 0 8 9'>
					<path d='M0 0l8 4.500L0 9z' fill='#777' />
				</svg>
				Settings
			</Foldout>
			<TransitionTimeline />
			<ListBox $top='13px'>
				<ListHead>
					<span>Conditions</span>
				</ListHead>
				<ConditionRow>
					<Handle />
					<ComboBox>
						<input type='text' defaultValue='isWalking' aria-label='Parameter' />
						<button aria-label='Choose parameter'>
							<Caret size={5} color='#555' />
						</button>
					</ComboBox>
					<select aria-label='Value' defaultValue='false'>
						<option>true</option>
						<option>false</option>
					</select>
					<svg width='5' height='7' viewBox='0 0 5 7'>
						<path d='M0 3h5L2.500 0zM0 4h5L2.500 7z' fill='#222' />
					</svg>
				</ConditionRow>
			</ListBox>
			<ListFooter $pair>
				<button aria-label='Add condition'>
					<svg width='8' height='8'>
						<path d='M0 4h8M4 0v8' stroke='#333' strokeWidth='2' />
					</svg>
				</button>
				<button aria-label='Remove condition'>
					<svg width='8' height='2'>
						<path d='M0 1h8' stroke='#888' strokeWidth='2' />
					</svg>
				</button>
			</ListFooter>
			<PreviewBar>
				Preview
				<Grip />
				<PivotButton aria-label='Pivot'>
					<svg width='12' height='12' viewBox='0 0 12 12' fill='none' stroke='#ccc'>
						<path d='M5.500 1v6.500h6M5.500 7.500L1 11M3.500 3l2-2 2 2M9.500 5.500l2 2-2 2M1 8.500V11h3' />
					</svg>
				</PivotButton>
				<svg width='21' height='12' viewBox='0 0 21 12' fill='none' stroke='#ccc'>
					<circle cx='15' cy='6' r='5' />
					<path d='M15 3v3.500h3M3 1.500h7M1 4.500h7M0 7.500h7M4 10.500h6' />
				</svg>
				<Speed type='range' min='0' max='2' step='0.1' defaultValue='1' aria-label='Playback speed' />
				1.00
			</PreviewBar>
			<Preview>
				<PlayStrip>
					<button aria-label='Play preview'>
						<Play size={15} />
					</button>
				</PlayStrip>
				<p>No model is available for preview.</p>
				<p>Please drag a model into this Preview Area.</p>
				<PreviewFooter>
					<p>0:00 (000.0%) Frame 0</p>
					<div>
						<svg width='8' height='14' viewBox='0 0 8 14'>
							<circle cx='4' cy='2.500' r='2.300' fill='#e0b078' />
							<path d='M0 6h8l-1 3.500H6L5.500 14h-3L2 9.500H1z' fill='#c08850' />
						</svg>
						<svg width='20' height='15' viewBox='0 0 20 15'>
							<rect width='20' height='15' rx='7.500' fill='#2d62b5' />
							<path d='M5 3.500h4.500l5 5-3.500 4-6-5z' fill='#fff' />
							<circle cx='7' cy='5.500' r='1' fill='#2d62b5' />
						</svg>
					</div>
				</PreviewFooter>
			</Preview>
		</InspectorBody>
	</Panel>
);

const WindowsTaskbar = () => (
	<Taskbar>
		<TaskButton aria-label='Start' $width='47px'>
			<svg width='16' height='16' viewBox='0 0 16 16' fill='#fff'>
				<path d='M0 2.200l6.500-.9v6.200H0zM7.300 1.200L16 0v7.500H7.300zM0 8.300h6.500v6.300L0 13.700zM7.300 8.300H16V16l-8.700-1.200z' />
			</svg>
		</TaskButton>
		<TaskButton aria-label='Search' $width='47px'>
			<svg width='16' height='16' viewBox='0 0 16 16' fill='none' stroke='#fff' strokeWidth='1.300'>
				<circle cx='10' cy='6' r='5.300' />
				<path d='M6 10L.5 15.500' strokeWidth='1.600' />
			</svg>
		</TaskButton>
		<TaskButton aria-label='Task view' $width='50px'>
			<svg width='20' height='14' viewBox='0 0 20 14' fill='none' stroke='#fff'>
				<path d='M4.500.5h11v13h-11zM3 2.500H.5v9H3M17 2.500h2.500v9H17' />
			</svg>
		</TaskButton>
		<TaskButton aria-label='Chrome' $running>
			<svg width='22' height='22' viewBox='0 0 22 22'>
				<circle cx='11' cy='11' r='11' fill='#ffcd40' />
				<path d='M1.500 5.500A11 11 0 0 1 20.500 5.500H11L6.500 13.500z' fill='#db4437' />
				<path d='M1.500 5.500A11 11 0 0 0 11 22L15.500 14 6.500 13.500z' fill='#0f9d58' />
				<circle cx='11' cy='11' r='5' fill='#f1f1f1' />
				<circle cx='11' cy='11' r='4' fill='#4285f4' />
			</svg>
		</TaskButton>
		<TaskButton aria-label='Visual Studio' $running>
			<svg width='24' height='24' viewBox='0 0 24 24' fill='#865fc5'>
				<path d='M18 0l6 2.500V22l-6 2L0 19.500V18l18 2.500z' />
				<path d='M12.500 4.500L15 5.500v10.500l-2.500 1-5-5-4 3.500L1 14V7l2.500-1 4 3.500zM3 8.500v4l2-2zM12.500 8L9.500 10.500l3 2.500z' fillRule='evenodd' />
			</svg>
		</TaskButton>
		<TaskButton aria-label='Unity' $running $active>
			<svg width='22' height='22' viewBox='0 0 22 22'>
				<path d='M0 11L16.500 0 21.500 2l.5 9-.5 9-5 2z' fill='#161616' />
				<path d='M2 11l7-6.500L14 3l-3.500 6.500H20l-9.500 3L14 19l-5-1.500z' fill='none' />
				<path d='M2 11l8.500-7 4-1L11 9.500H5.500zM2 11l3.500 1.500H11l3.500 6.500-4-1zM12.500 10.500L16.500 3.500l3 2v6zM12.500 12l7 1-.5 4-2.500 1.500z' fill='#fff' />
			</svg>
		</TaskButton>
		<Tray>
			<button aria-label='Show hidden icons'>
				<svg width='12' height='7' viewBox='0 0 12 7' fill='none' stroke='#fff' strokeWidth='1.300'>
					<path d='M.5 6.500L6 1l5.500 5.500' />
				</svg>
			</button>
			<button aria-label='Network'>
				<svg width='16' height='14' viewBox='0 0 16 14' fill='none' stroke='#fff'>
					<path d='M6 1.500h9.500v8H3.500V6M.5.500h4v4h-4zM2.500 4.500v8M5 13.500h8M8.500 10v3.500' />
				</svg>
			</button>
			<button aria-label='Volume'>
				<svg width='17' height='14' viewBox='0 0 17 14' fill='none' stroke='#fff'>
					<path d='M.5 4.500H3L6.500 1v12L3 9.500H.5zM8.500 5q1.500 2 0 4M11 3q3 4 0 8M13.500 1q4.500 6 0 12' />
				</svg>
			</button>
			<time>
				03:29
				<br />
				11/4/2017
			</time>
			<NoticeButton>
				<button aria-label='Notifications'>
					<svg width='16' height='16' viewBox='0 0 16 16' fill='none' stroke='#fff'>
						<path d='M.5.500h15v12H10l-2 2.500-2-2.500H.5z' />
					</svg>
				</button>
			</NoticeButton>
		</Tray>
	</Taskbar>
);

const App = () => {
	return (
		<Screen>
			<GlobalStyle />
			<TitleBar>
				<FaUnity size={15} color='#222' />
				<h1>Unity 5.6.0f3 Personal (64bit) - UnnamedGuy.unity - Random Guy - PC, Mac &amp; Linux Standalone &lt;DX11&gt;</h1>
				<WindowButton aria-label='Minimize'>
					<svg width='10' height='10'>
						<path d='M0 5.500h10' stroke='#000' />
					</svg>
				</WindowButton>
				<WindowButton aria-label='Restore'>
					<svg width='10' height='10' fill='none' stroke='#000'>
						<path d='M.5 2.500h7v7h-7zM2.500 2V.5h7v7H8' />
					</svg>
				</WindowButton>
				<WindowButton aria-label='Close'>
					<svg width='10' height='10' stroke='#000'>
						<path d='M0 0l10 10M10 0L0 10' />
					</svg>
				</WindowButton>
			</TitleBar>
			<MenuBar>
				{menus.map((name) => (
					<a key={name} href='#/'>{name}</a>
				))}
			</MenuBar>
			<MainToolbar />
			<Workspace>
				<MainColumn>
					<TopRow>
						<Hierarchy />
						<Animator />
					</TopRow>
					<Console />
				</MainColumn>
				<Inspector />
			</Workspace>
			<StatusStrip />
			<WindowsTaskbar />
		</Screen>
	);
};

export default App;
